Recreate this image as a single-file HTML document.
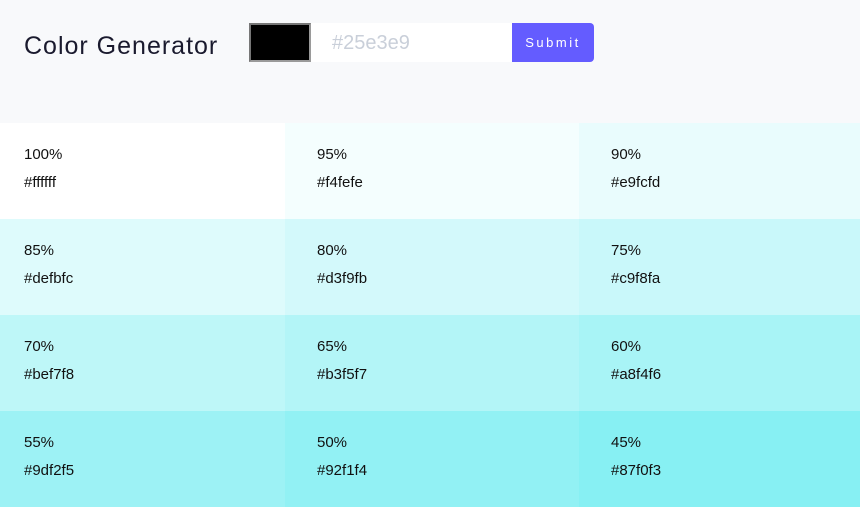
<!DOCTYPE html>
<html><head><style>
body{margin:0;width:860px;height:493px;overflow:hidden;background:#f8f9fb;font-family:"Liberation Sans",sans-serif;color:#111}
h1{position:absolute;left:24px;top:32px;margin:0;font-weight:400;font-size:25px;letter-spacing:1px;color:#1a1a2e}
.cb{position:absolute;left:249px;top:23px;width:58px;height:35px;background:#000;border:2px solid #9a9a9a;border-top-color:#777;border-left-color:#777}
.in{position:absolute;left:311px;top:23px;width:201px;height:39px;background:#fff;color:#c9cfd9;font-size:20px;line-height:40px;box-sizing:border-box;padding-left:21px}
.bt{position:absolute;left:512px;top:23px;width:82px;height:39px;background:#645cff;color:#fff;font-size:13px;letter-spacing:2.5px;line-height:40px;text-align:center;border-radius:0 4px 4px 0}
.g{position:absolute;top:123px;left:0;width:860px}
.c{position:absolute;height:96px;font-size:15px}
.c div{position:absolute}
</style></head><body>
<h1>Color Generator</h1>
<div class="cb"></div><div class="in">#25e3e9</div><div class="bt">Submit</div>
<div class="g" id="g"></div>
<script>
var d=[["100%","#ffffff"],["95%","#f4fefe"],["90%","#e9fcfd"],["85%","#defbfc"],["80%","#d3f9fb"],["75%","#c9f8fa"],["70%","#bef7f8"],["65%","#b3f5f7"],["60%","#a8f4f6"],["55%","#9df2f5"],["50%","#92f1f4"],["45%","#87f0f3"]];
var xs=[0,285,579],ws=[285,294,281],px=[24,32,32],h="";
d.forEach(function(e,i){var c=i%3,r=Math.floor(i/3);
h+='<div class="c" style="left:'+xs[c]+'px;top:'+(r*96)+'px;width:'+ws[c]+'px;background:'+e[1]+'"><div style="left:'+px[c]+'px;top:23px">'+e[0]+'</div><div style="left:'+px[c]+'px;top:51px">'+e[1]+'</div></div>';});
document.getElementById('g').innerHTML=h;
</script>
</body></html>
